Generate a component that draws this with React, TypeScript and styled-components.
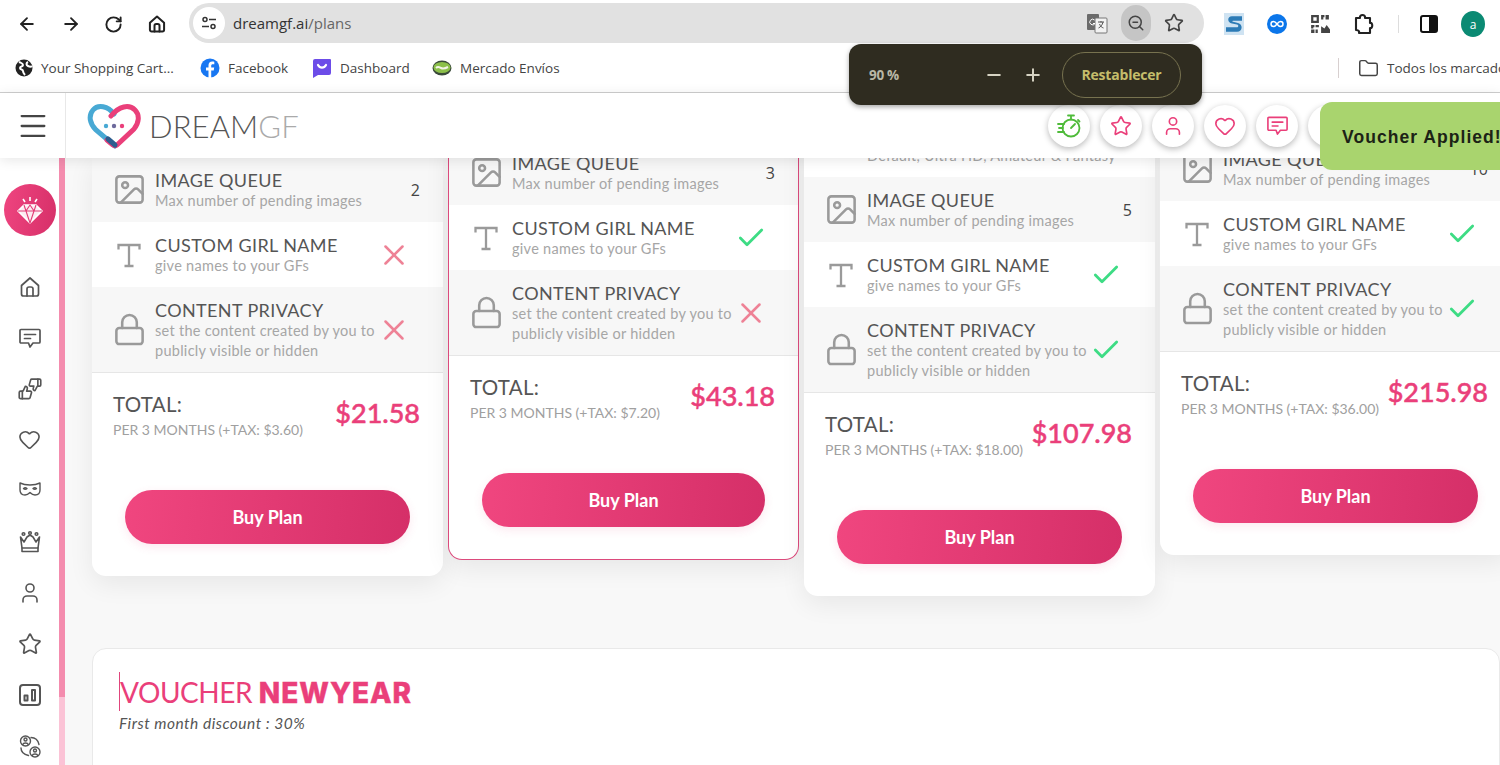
import styled, { createGlobalStyle } from "styled-components";
import {
  ArrowLeft,
  ArrowRight,
  Check,
  Folder,
  Heart,
  Image as ImageIcon,
  Lock,
  Menu,
  Minus,
  Plus,
  RotateCw,
  Star,
  User,
  X,
  ZoomOut,
} from "lucide-react";

const GlobalStyle = createGlobalStyle`
  html, body {
    margin: 0;
    height: 765px;
    overflow: hidden;
    background: #fff;
  }
  * { box-sizing: border-box; }
`;

const Page = styled.div`
  position: relative;
  width: 1500px;
  height: 765px;
  overflow: hidden;
  display: flex;
  flex-direction: column;
  font-family: "Lato", "Open Sans", sans-serif;
`;

/* browser chrome */
const Toolbar = styled.div`
  height: 46px;
  flex-shrink: 0;
  display: flex;
  align-items: center;
  padding: 2px 0 0 17px;
  background: #fff;
  color: #222;
`;

const NavIcons = styled.div`
  display: flex;
  gap: 23.5px;
  align-items: center;
  width: 172px;
`;

const AddressBar = styled.div`
  width: 1015px;
  height: 40px;
  margin-top: -2px;
  border-radius: 20px;
  background: #e1e1e1;
  display: flex;
  align-items: center;
  padding: 0 20px 0 4px;
`;

const SiteInfo = styled.div`
  width: 32px;
  height: 32px;
  border-radius: 50%;
  background: #fff;
  display: flex;
  align-items: center;
  justify-content: center;
  margin-right: 8px;
`;

const Url = styled.div`
  flex: 1;
  font-family: "Open Sans", sans-serif;
  font-size: 15px;
  color: #333;
  span { color: #666; }
`;

const BarIcons = styled.div`
  display: flex;
  align-items: center;
  gap: 13px;
  color: #444;
`;

const ZoomChip = styled.div`
  width: 30px;
  height: 36px;
  border-radius: 15px;
  background: #c5c5c5;
  display: flex;
  align-items: center;
  justify-content: center;
`;

const Extensions = styled.div`
  display: flex;
  align-items: center;
  margin-left: 20px;
  gap: 23px;
`;

const ExtDivider = styled.div`
  width: 1px;
  height: 18px;
  background: #ddd;
  margin-right: -2px;
`;

const Avatar = styled.div`
  width: 24px;
  height: 26px;
  border-radius: 50%;
  background: #0b8a73;
  color: #fff;
  font-family: "Open Sans", sans-serif;
  font-size: 12px;
  display: flex;
  align-items: center;
  justify-content: center;
`;

const Bookmarks = styled.div`
  height: 47px;
  flex-shrink: 0;
  display: flex;
  align-items: center;
  padding: 0 0 2px 15px;
  border-bottom: 1px solid #cfcfcf;
  background: #fff;
  white-space: nowrap;
  overflow: hidden;
`;

const Bookmark = styled.div<{ $width: number }>`
  width: ${(p) => p.$width}px;
  flex-shrink: 0;
  display: flex;
  align-items: center;
  gap: 8px;
  font-family: "Open Sans", sans-serif;
  font-size: 13.5px;
  color: #444;
  svg { flex-shrink: 0; }
`;

const BookmarkDivider = styled.div`
  width: 1px;
  height: 20px;
  background: #d8d0d0;
  margin: 0 19px 0 auto;
  flex-shrink: 0;
`;

/* zoom bubble, lies over the page */
const ZoomBubble = styled.div`
  position: absolute;
  z-index: 5;
  left: 849px;
  top: 44px;
  width: 353px;
  height: 61px;
  border-radius: 12px;
  background: #2f2c20;
  box-shadow: 0 2px 5px rgba(0, 0, 0, 0.35);
  display: flex;
  align-items: center;
  padding: 0 21px 0 20px;
  color: #d6d3c3;
`;

const ZoomValue = styled.div`
  font-family: "Open Sans", sans-serif;
  font-size: 13.5px;
  font-weight: 700;
  letter-spacing: -0.3px;
  color: #b9b7a6;
  flex: 1;
`;

const ZoomButtons = styled.div`
  display: flex;
  gap: 19px;
  margin-right: 19px;
`;

const ResetButton = styled.div`
  width: 119px;
  height: 46px;
  border: 1px solid #77724f;
  border-radius: 23px;
  display: flex;
  align-items: center;
  justify-content: center;
  font-family: "Open Sans", sans-serif;
  font-size: 14px;
  font-weight: 700;
  letter-spacing: -0.2px;
  color: #c5bd6b;
`;

/* app header */
const AppHeader = styled.header`
  position: relative;
  z-index: 2;
  height: 65px;
  flex-shrink: 0;
  display: flex;
  align-items: center;
  background: #fff;
  box-shadow: 0 2px 12px rgba(0, 0, 0, 0.1);
`;

const MenuCell = styled.div`
  width: 66px;
  height: 100%;
  border-right: 1px solid #e8e8e8;
  display: flex;
  align-items: center;
  justify-content: center;
  color: #444;
`;

const Logo = styled.div`
  display: flex;
  align-items: center;
  gap: 7px;
  margin-left: 21px;
  flex: 1;
`;

const LogoText = styled.div`
  font-size: 31px;
  font-weight: 300;
  letter-spacing: 0.1px;
  color: #555;
  span { color: #aaa; }
`;

const HeaderActions = styled.div`
  display: flex;
  gap: 10px;
  padding-right: 150px;
`;

const RoundAction = styled.div<{ $color: string }>`
  width: 42px;
  height: 42px;
  border-radius: 50%;
  background: #fff;
  box-shadow: 0 2px 6px rgba(0, 0, 0, 0.28);
  display: flex;
  align-items: center;
  justify-content: center;
  color: ${(p) => p.$color};
`;

const Toast = styled.div`
  position: absolute;
  z-index: 4;
  left: 1320px;
  top: 102px;
  width: 200px;
  height: 68px;
  border-radius: 12px;
  background: #a9d46e;
  display: flex;
  align-items: center;
  padding: 2px 0 0 22px;
  font-family: "Liberation Sans", sans-serif;
  font-size: 17.5px;
  font-weight: 700;
  letter-spacing: 1.05px;
  color: #1c2316;
  white-space: nowrap;
`;

/* below the header */
const Body = styled.div`
  flex: 1;
  min-height: 0;
  display: flex;
`;

const Sidebar = styled.nav`
  width: 59px;
  flex-shrink: 0;
  background: #fff;
  display: flex;
  flex-direction: column;
  align-items: center;
  padding-top: 26px;
  color: #555;
`;

const GemButton = styled.div`
  width: 52px;
  height: 52px;
  border-radius: 50%;
  background: linear-gradient(100deg, #ef4580, #d62f68);
  display: flex;
  align-items: center;
  justify-content: center;
  margin-bottom: 25px;
  flex-shrink: 0;
`;

const SideItem = styled.div`
  height: 51px;
  flex-shrink: 0;
  display: flex;
  align-items: center;
  justify-content: center;
`;

const ScrollTrack = styled.div`
  width: 6px;
  flex-shrink: 0;
  background: #fbc3d6;
`;

const ScrollThumb = styled.div`
  height: 539px;
  background: #f48cae;
`;

const Content = styled.main`
  flex: 1;
  min-width: 0;
  overflow: hidden;
  background: #f8f8f8;
  padding-left: 27px;
`;

const Cards = styled.div`
  display: flex;
  align-items: flex-start;
  gap: 5px;
`;

const Card = styled.section<{ $lift: number; $featured?: boolean }>`
  width: 351px;
  flex-shrink: 0;
  margin-top: -${(p) => p.$lift}px;
  background: #fff;
  border-radius: 0 0 14px 14px;
  overflow: hidden;
  box-shadow: 0 8px 26px rgba(0, 0, 0, 0.07);
  ${(p) =>
    p.$featured &&
    `
    border: 1px solid #dc4a7c;
    border-top: 0;
  `}
`;

const Row = styled.div<{ $tall?: boolean; $shade?: boolean }>`
  height: ${(p) => (p.$tall ? 85 : 65)}px;
  display: flex;
  align-items: center;
  padding-left: 23px;
  background: ${(p) => (p.$shade ? "#f7f7f7" : "#fff")};
  color: #9a9a9a;
`;

const RowIcon = styled.div`
  width: 40px;
  flex-shrink: 0;
  display: flex;
  align-items: center;
`;

const PictureIcon = styled(ImageIcon)`
  flex-shrink: 0;
  margin-left: -3px;
`;

const PadlockIcon = styled(Lock)`
  flex-shrink: 0;
  margin-left: -3px;
`;

const RowText = styled.div`
  width: 226px;
  flex-shrink: 0;
`;

const RowTitle = styled.div`
  font-size: 18px;
  line-height: 22px;
  color: #555;
  letter-spacing: 0.38px;
  white-space: nowrap;
`;

const RowSub = styled.div<{ $single?: boolean }>`
  font-size: 14.5px;
  line-height: 20px;
  color: #a6a6a6;
  letter-spacing: 0.28px;
  white-space: ${(p) => (p.$single ? "nowrap" : "normal")};
`;

const RowMark = styled.div`
  width: 26px;
  flex-shrink: 0;
  display: flex;
  justify-content: center;
  svg { flex-shrink: 0; }
`;

const RowCount = styled.div`
  flex: 1;
  padding-right: 23px;
  text-align: right;
  font-family: "Open Sans", sans-serif;
  font-size: 16px;
  color: #444;
`;

const TotalBlock = styled.div`
  height: 118px;
  border-top: 1px solid #e6e6e6;
  padding: 19px 23px 0 21px;
  display: flex;
  justify-content: space-between;
`;

const TotalLabel = styled.div`
  font-size: 20.5px;
  line-height: 25px;
  color: #555;
  letter-spacing: 0.3px;
`;

const TotalNote = styled.div`
  font-size: 14px;
  line-height: 25px;
  color: #a0a0a0;
  white-space: nowrap;
`;

const Price = styled.div`
  font-size: 27px;
  font-weight: 500;
  line-height: 40px;
  margin-top: 1px;
  color: #ea3f7a;
  -webkit-text-stroke: 0.5px #ea3f7a;
`;

const BuyWrap = styled.div`
  padding: 0 33px 32px;
`;

const BuyButton = styled.div`
  height: 54px;
  border-radius: 27px;
  background: linear-gradient(95deg, #f0467f, #d52f68);
  color: #fff;
  font-size: 18px;
  font-weight: 700;
  display: flex;
  align-items: center;
  justify-content: center;
  box-shadow: 0 3px 10px rgba(232, 62, 120, 0.12);
`;

const VoucherCard = styled.section`
  margin-top: 52px;
  height: 200px;
  background: #fff;
  border: 1px solid #e9e9e9;
  border-radius: 14px;
  padding: 23px 26px;
`;

const VoucherTitle = styled.div`
  font-size: 28px;
  line-height: 40px;
  color: #ea3f7a;
  letter-spacing: -0.45px;
  strong {
    font-family: "Inter", sans-serif;
    font-size: 28px;
    font-weight: 800;
    letter-spacing: 1px;
    -webkit-text-stroke: 0.4px #ea3f7a;
  }
`;

const Caret = styled.span`
  display: inline-block;
  width: 1px;
  height: 39px;
  background: #e0457c;
  vertical-align: top;
`;

const VoucherNote = styled.div`
  margin-top: 1px;
  font-size: 15.5px;
  font-style: italic;
  color: #555;
  letter-spacing: 0.5px;
`;

const sideIcon = {
  width: 24,
  height: 24,
  viewBox: "0 0 24 24",
  fill: "none",
  stroke: "currentColor",
  strokeWidth: 1.7,
  strokeLinecap: "round" as const,
  strokeLinejoin: "round" as const,
};

const HomeGlyph = ({ size = 24, weight = 1.7 }: { size?: number; weight?: number }) => (
  <svg {...sideIcon} width={size} height={size} strokeWidth={weight}>
    <path d="M3.5 10.5 12 3l8.5 7.5V19a2 2 0 0 1-2 2h-13a2 2 0 0 1-2-2z" />
    <path d="M9 21v-7a2 2 0 0 1 2-2h2a2 2 0 0 1 2 2v7" />
  </svg>
);

const ChatGlyph = ({ size = 24 }: { size?: number }) => (
  <svg {...sideIcon} width={size} height={size}>
    <path d="M3 3.5h18a1 1 0 0 1 1 1V16a1 1 0 0 1-1 1h-6l-3 4-1.5-4H3a1 1 0 0 1-1-1V4.5a1 1 0 0 1 1-1z" />
    <path d="M6.5 8.5h11M6.5 12.5h6" />
  </svg>
);

const ThumbsGlyph = () => (
  <svg {...sideIcon}>
    <g transform="translate(0 8) scale(.62)" strokeWidth="2.7">
      <path d="M7 10v12" />
      <path d="M15 5.88 14 10h5.83a2 2 0 0 1 1.92 2.56l-2.33 8A2 2 0 0 1 17.5 22H4a2 2 0 0 1-2-2v-8a2 2 0 0 1 2-2h2.76a2 2 0 0 0 1.79-1.11L12 2a3.13 3.13 0 0 1 3 3.88Z" />
    </g>
    <g transform="translate(10 1) scale(.58)" strokeWidth="2.8">
      <path d="M17 14V2" />
      <path d="M9 18.12 10 14H4.17a2 2 0 0 1-1.92-2.56l2.33-8A2 2 0 0 1 6.5 2H20a2 2 0 0 1 2 2v8a2 2 0 0 1-2 2h-2.76a2 2 0 0 0-1.79 1.11L12 22a3.13 3.13 0 0 1-3-3.88Z" />
    </g>
  </svg>
);

const MaskGlyph = () => (
  <svg {...sideIcon} strokeWidth={1.4}>
    <g transform="translate(0 -2)">
      <path d="M2 6c3 1.5 6 2 10 2s7-.5 10-2v7c0 3-2 5-5 5-2 0-3.5-1-5-2.5C10.5 17 9 18 7 18c-3 0-5-2-5-5z" />
      <path d="M5.5 11.5c1-.8 2.5-.8 3.5 0-1 1.2-2.5 1.2-3.5 0zM15 11.5c1-.8 2.5-.8 3.5 0-1 1.2-2.5 1.2-3.5 0z" />
    </g>
  </svg>
);

const BarsGlyph = () => (
  <svg {...sideIcon} strokeWidth={2}>
    <rect x="2" y="2" width="20" height="20" rx="3" />
    <rect x="6.5" y="12.5" width="3" height="5" />
    <rect x="14" y="7" width="3" height="10.5" />
  </svg>
);

const SwapGlyph = () => (
  <svg {...sideIcon} strokeWidth={1.4}>
    <circle cx="7.5" cy="7" r="5" />
    <circle cx="7.5" cy="5.5" r="1.5" />
    <path d="M4.8 10.5c.5-2 4.9-2 5.4 0" />
    <circle cx="17" cy="18" r="5" />
    <circle cx="17" cy="16.5" r="1.5" />
    <path d="M14.3 21.5c.5-2 4.9-2 5.4 0" />
    <path d="M13 3.5c4 0 7 2.5 8 7M3 14c0 3.5 3 6.5 7.5 7.5" />
  </svg>
);

const CrownGlyph = () => (
  <svg {...sideIcon} strokeWidth={1.6}>
    <path d="M2.5 7 6 12l3-5 3-2 3 2 3 5 3.5-5L20 18H4z" />
    <path d="M4 18v3.5h16V18" />
    <circle cx="12" cy="3" r="1.3" />
    <circle cx="5.5" cy="4" r="1.3" />
    <circle cx="18.5" cy="4" r="1.3" />
  </svg>
);

const SerifT = () => (
  <svg width="28" height="28" viewBox="0 0 28 28" fill="none" stroke="#9a9a9a" strokeWidth="2.3">
    <path d="M3.5 8.5V4h21v4.5M14 4v21M9.5 25h9" />
  </svg>
);

const TimerGlyph = () => (
  <svg width="24" height="26" viewBox="0 0 24 26" fill="none" stroke="#4fbb3a" strokeWidth="1.8" strokeLinecap="round">
    <circle cx="14" cy="15" r="8.5" />
    <path d="M11 2.5h6M14 2.5v4M21 7l1.5 1.5M14 15l4-4" />
    <path d="M1 11h6M2 15h4M1 19h6" />
  </svg>
);

const LogoHeart = () => (
  <svg width="55" height="46" viewBox="0 0 55 46" fill="none" strokeWidth="5" strokeLinecap="round">
    <path d="M27 11C21 3 11 1 6 7c-5 6-3 14 3 20l19 16" stroke="#48a9d4" />
    <path d="M20 37l6 5c1 1 3 1 4 0l17-16c5-6 6-14 1-19-6-6-16-4-24 6" stroke="#ea3f7a" />
    <path d="M21 36l7 6" stroke="#2c5d8f" />
    <circle cx="19" cy="23" r="2.2" fill="#48a9d4" />
    <circle cx="27" cy="23" r="2.2" fill="#6d6a9c" />
    <circle cx="35" cy="23" r="2.2" fill="#ea3f7a" />
  </svg>
);

const GemGlyph = () => (
  <svg width="26" height="28" viewBox="0 0 26 28" fill="none" stroke="#fff" strokeWidth="1.6" strokeLinejoin="round">
    <path d="M7 9h12l6 6-12 12L1 15z" fill="rgba(255,255,255,.9)" />
    <path d="M1 15h24M9 15l4 12 4-12M7 9l2 6 4-6 4 6 2-6" stroke="#e23c76" strokeWidth="1.1" />
    <path d="M13 1v4M6 3l2 3M20 3l-2 3" />
  </svg>
);

const SiteInfoGlyph = () => (
  <svg width="16" height="16" viewBox="0 0 16 16" fill="none" stroke="#333" strokeWidth="1.5">
    <circle cx="4" cy="4.5" r="2" />
    <path d="M8 4.5h7M1 11.5h7" />
    <circle cx="12" cy="11.5" r="2" />
  </svg>
);

const TranslateGlyph = () => (
  <svg width="22" height="22" viewBox="0 0 22 22">
    <rect x="1" y="2" width="12" height="16" rx="1" fill="#6b6b6b" />
    <rect x="9" y="6" width="12" height="15" rx="1" fill="#f2f2f2" stroke="#777" />
    <path d="M12 10h6M15 9v1.5M17 10c-.5 3-2.5 5-4.5 6M13.5 12c.8 2 2.2 3.5 4 4" stroke="#555" fill="none" />
    <path d="M8.5 8A2.8 2.8 0 1 0 9 11.5H7" stroke="#fff" fill="none" />
  </svg>
);

const SnagitGlyph = () => (
  <svg width="20" height="22" viewBox="0 0 20 20" preserveAspectRatio="none">
    <rect width="20" height="20" fill="#cfe3f2" />
    <path d="M18 3H8C3 3 3 9 8 9.5l5 1c2 .5 1.5 2.5 0 2.5H2v4h11c6 0 6-7 1-8l-5-1c-1-.3-1-1 0-1h9z" fill="#2c7bb6" />
  </svg>
);

const InfinityGlyph = () => (
  <svg width="20" height="20" viewBox="0 0 20 20" fill="none">
    <circle cx="10" cy="10" r="10" fill="#0b76ea" />
    <path d="M10 10c-1.5-2-2.5-2.5-3.5-2.5a2.5 2.5 0 0 0 0 5c1 0 2-.5 3.5-2.5s2.5-2.5 3.5-2.5a2.5 2.5 0 0 1 0 5c-1 0-2-.5-3.5-2.5z" stroke="#fff" strokeWidth="1.5" />
  </svg>
);

const QrGlyph = () => (
  <svg width="20" height="20" viewBox="0 0 18 18" fill="#444">
    <path d="M1 1h7v7H1zm2 2v3h3V3zM10 1h3v2h-1v2h-2zM14 1h3v4h-3zM1 10h3v2H3v1H1zM5 10h3v2H5zM1 14h3v3H1zM5 14h2v3H5z" fillRule="evenodd" />
    <path d="M10 11l3 2 2-3 3 4v3h-8z" />
  </svg>
);

const PuzzleGlyph = () => (
  <svg width="22" height="24" viewBox="0 0 22 24" fill="none" stroke="#222" strokeWidth="2.1" strokeLinejoin="round">
    <path d="M3 6h4c-1-4 6-4 5 0h5v5c3-1 3 6 0 5v5H6c1-3-3-3-3-3z" />
  </svg>
);

const PanelGlyph = () => (
  <svg width="18" height="18" viewBox="0 0 18 18">
    <rect x="1" y="1" width="16" height="16" rx="2" fill="none" stroke="#111" strokeWidth="2" />
    <rect x="9" y="1" width="8" height="16" fill="#111" />
  </svg>
);

const GlobeMark = () => (
  <svg width="18" height="18" viewBox="0 0 18 18">
    <circle cx="9" cy="9" r="8.5" fill="#222" />
    <path d="M4 3c2 1 4 1 4 3S5 7 5 9s3 1 3 3 1 3 2 4M13 3c-2 1-2 3 0 4s3 1 4 0" stroke="#fff" strokeWidth="2" fill="none" />
  </svg>
);

const FacebookMark = () => (
  <svg width="20" height="20" viewBox="0 0 20 20">
    <circle cx="10" cy="10" r="9.5" fill="#1877f2" />
    <path d="M11.2 20v-7.5h2.5l.5-3h-3V7.8c0-.9.4-1.5 1.6-1.5h1.5V3.7c-.5-.1-1.3-.2-2.1-.2-2.3 0-3.7 1.3-3.7 3.8v2.2H6v3h2.5V20z" fill="#fff" />
  </svg>
);

const DashboardMark = () => (
  <svg width="20" height="20" viewBox="0 0 20 20">
    <path d="M1 3a2 2 0 0 1 2-2h15a1 1 0 0 1 1 1v13a2 2 0 0 1-2 2H6l-5 3z" fill="#6c4ce8" />
    <path d="M6 7c2 3.5 6 3.5 8 0" stroke="#fff" strokeWidth="2.2" fill="none" strokeLinecap="round" />
  </svg>
);

const MercadoMark = () => (
  <svg width="20" height="16" viewBox="0 0 20 16">
    <ellipse cx="10" cy="8" rx="9.5" ry="7.5" fill="#3a4a3a" />
    <ellipse cx="10" cy="7.5" rx="8.5" ry="5.5" fill="#8cc04a" />
    <path d="M4 8c2-2 3-1 5 0s3 1 7-1" stroke="#f3f3e8" strokeWidth="2" fill="none" />
  </svg>
);

const sideItems = [
  <HomeGlyph key="home" />,
  <ChatGlyph key="chat" />,
  <ThumbsGlyph key="thumbs" />,
  <Heart key="heart" size={23} strokeWidth={1.7} />,
  <MaskGlyph key="mask" />,
  <CrownGlyph key="crown" />,
  <User key="user" size={24} strokeWidth={1.6} />,
  <Star key="star" size={24} strokeWidth={1.7} />,
  <BarsGlyph key="bars" />,
  <SwapGlyph key="swap" />,
];

type Plan = {
  lift: number;
  featured?: boolean;
  extraRow?: boolean;
  queue: string;
  customName: boolean;
  privacy: boolean;
  price: string;
  tax: string;
};

const plans: Plan[] = [
  { lift: 1, queue: "2", customName: false, privacy: false, price: "$21.58", tax: "$3.60" },
  { lift: 18, featured: true, queue: "3", customName: true, privacy: false, price: "$43.18", tax: "$7.20" },
  { lift: 46, extraRow: true, queue: "5", customName: true, privacy: true, price: "$107.98", tax: "$18.00" },
  { lift: 22, queue: "10", customName: true, privacy: true, price: "$215.98", tax: "$36.00" },
];

const Mark = ({ on }: { on: boolean }) =>
  on ? <Check size={32} color="#3ddc84" strokeWidth={2.1} /> : <X size={34} color="#ee8296" strokeWidth={1.8} />;

const PlanCard = ({ plan }: { plan: Plan }) => (
  <Card $lift={plan.lift} $featured={plan.featured}>
    {plan.extraRow && (
      <Row>
        <RowIcon />
        <RowText>
          <RowTitle>IMAGE QUALITY</RowTitle>
          <RowSub $single>Default, Ultra HD, Amateur &amp; Fantasy</RowSub>
        </RowText>
      </Row>
    )}
    <Row $shade>
      <RowIcon>
        <PictureIcon size={35} strokeWidth={1.75} />
      </RowIcon>
      <RowText>
        <RowTitle>IMAGE QUEUE</RowTitle>
        <RowSub>Max number of pending images</RowSub>
      </RowText>
      <RowCount>{plan.queue}</RowCount>
    </Row>
    <Row>
      <RowIcon>
        <SerifT />
      </RowIcon>
      <RowText>
        <RowTitle>CUSTOM GIRL NAME</RowTitle>
        <RowSub>give names to your GFs</RowSub>
      </RowText>
      <RowMark>
        <Mark on={plan.customName} />
      </RowMark>
    </Row>
    <Row $tall $shade>
      <RowIcon>
        <PadlockIcon size={35} strokeWidth={1.75} />
      </RowIcon>
      <RowText>
        <RowTitle>CONTENT PRIVACY</RowTitle>
        <RowSub>set the content created by you to publicly visible or hidden</RowSub>
      </RowText>
      <RowMark>
        <Mark on={plan.privacy} />
      </RowMark>
    </Row>
    <TotalBlock>
      <div>
        <TotalLabel>TOTAL:</TotalLabel>
        <TotalNote>PER 3 MONTHS (+TAX: {plan.tax})</TotalNote>
      </div>
      <Price>{plan.price}</Price>
    </TotalBlock>
    <BuyWrap>
      <BuyButton>Buy Plan</BuyButton>
    </BuyWrap>
  </Card>
);

const App = () => (
  <Page>
    <GlobalStyle />
    <Toolbar>
      <NavIcons>
        <ArrowLeft size={20} strokeWidth={2.2} />
        <ArrowRight size={20} strokeWidth={2.2} />
        <RotateCw size={19} strokeWidth={2.4} />
        <HomeGlyph size={20} weight={2.4} />
      </NavIcons>
      <AddressBar>
        <SiteInfo>
          <SiteInfoGlyph />
        </SiteInfo>
        <Url>
          dreamgf.ai<span>/plans</span>
        </Url>
        <BarIcons>
          <TranslateGlyph />
          <ZoomChip>
            <ZoomOut size={18} />
          </ZoomChip>
          <Star size={20} />
        </BarIcons>
      </AddressBar>
      <Extensions>
        <SnagitGlyph />
        <InfinityGlyph />
        <QrGlyph />
        <PuzzleGlyph />
        <ExtDivider />
        <PanelGlyph />
        <Avatar>a</Avatar>
      </Extensions>
    </Toolbar>
    <Bookmarks>
      <Bookmark $width={185}>
        <GlobeMark />
        Your Shopping Cart...
      </Bookmark>
      <Bookmark $width={112}>
        <FacebookMark />
        Facebook
      </Bookmark>
      <Bookmark $width={120}>
        <DashboardMark />
        Dashboard
      </Bookmark>
      <Bookmark $width={150}>
        <MercadoMark />
        Mercado Envíos
      </Bookmark>
      <BookmarkDivider />
      <Bookmark $width={142}>
        <Folder size={21} strokeWidth={1.7} />
        Todos los marcadores
      </Bookmark>
    </Bookmarks>
    <ZoomBubble>
      <ZoomValue>90 %</ZoomValue>
      <ZoomButtons>
        <Minus size={20} strokeWidth={2.4} />
        <Plus size={20} strokeWidth={2.4} />
      </ZoomButtons>
      <ResetButton>Restablecer</ResetButton>
    </ZoomBubble>
    <AppHeader>
      <MenuCell>
        <Menu size={34} strokeWidth={1.6} />
      </MenuCell>
      <Logo>
        <LogoHeart />
        <LogoText>
          DREAM<span>GF</span>
        </LogoText>
      </Logo>
      <HeaderActions>
        <RoundAction $color="#4fbb3a">
          <TimerGlyph />
        </RoundAction>
        <RoundAction $color="#ea3f7a">
          <Star size={22} strokeWidth={1.8} />
        </RoundAction>
        <RoundAction $color="#ea3f7a">
          <User size={22} strokeWidth={1.8} />
        </RoundAction>
        <RoundAction $color="#ea3f7a">
          <Heart size={22} strokeWidth={1.8} />
        </RoundAction>
        <RoundAction $color="#ea3f7a">
          <ChatGlyph size={23} />
        </RoundAction>
        <RoundAction $color="#ea3f7a" />
      </HeaderActions>
    </AppHeader>
    <Toast>Voucher Applied!</Toast>
    <Body>
      <Sidebar>
        <GemButton>
          <GemGlyph />
        </GemButton>
        {sideItems.map((icon) => (
          <SideItem key={icon.key}>{icon}</SideItem>
        ))}
      </Sidebar>
      <ScrollTrack>
        <ScrollThumb />
      </ScrollTrack>
      <Content>
        <Cards>
          {plans.map((plan) => (
            <PlanCard key={plan.price} plan={plan} />
          ))}
        </Cards>
        <VoucherCard>
          <VoucherTitle>
            <Caret />
            VOUCHER <strong>NEWYEAR</strong>
          </VoucherTitle>
          <VoucherNote>First month discount : 30%</VoucherNote>
        </VoucherCard>
      </Content>
    </Body>
  </Page>
);

export default App;
